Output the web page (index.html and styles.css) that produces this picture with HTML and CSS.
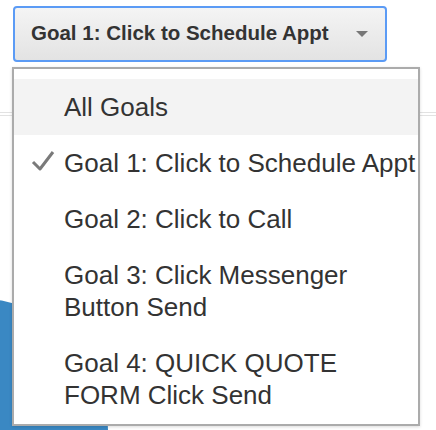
FILE: index.html
```html
<!DOCTYPE html>
<html lang="en">
<head>
  <meta charset="UTF-8" />
  <meta name="viewport" content="width=device-width, initial-scale=1.0"/>
  <title>Goal Filter</title>
  <link rel="stylesheet" href="styles.css">
</head>
<body>
  <div class="page">
    <div class="toolbar">
      <button class="goal-select">
        <span class="goal-label">Goal 1: Click to Schedule Appt</span>
        <span class="caret"></span>
      </button>
    </div>

    <div class="report">
      <div class="pie"></div>
    </div>

    <!-- open dropdown menu -->
    <ul class="goal-menu">
      <li class="goal-item hover">All Goals</li>
      <li class="goal-item selected">
        <svg class="check" width="24" height="24" viewBox="0 0 24 24">
          <polyline points="2,12 9,19 22,2" fill="none" stroke="#7a7a7a" stroke-width="3" stroke-linejoin="round" />
        </svg>
        Goal 1: Click to Schedule Appt
      </li>
      <li class="goal-item">Goal 2: Click to Call</li>
      <li class="goal-item">Goal 3: Click Messenger Button Send</li>
      <li class="goal-item">Goal 4: QUICK QUOTE FORM Click Send</li>
    </ul>
  </div>
</body>
</html>
```

FILE: styles.css
```css
:root {
  --text-color: #333333;
  --focus-color: #5b9bf5;
  --menu-border: #ababab;
  --hover-bg: #f3f3f3;
  --chart-blue: #3a88c3;
}
body {
  margin: 0;
  font-family: 'Liberation Sans', Arial, sans-serif;
  color: var(--text-color);
  background-color: #ffffff;
  overflow: hidden;
}
.page {
  position: relative;
  width: 436px;
  height: 430px;
  overflow: hidden;
}
.toolbar {
  height: 116px;
  padding: 6px 0 0 13px;
  box-sizing: border-box;
  border-bottom: 4px double #e2e2e2;
}
.goal-select {
  display: flex;
  align-items: center;
  justify-content: space-between;
  width: 374px;
  height: 56px;
  padding: 0 17px 0 16px;
  border: 2px solid var(--focus-color);
  border-radius: 4px;
  background: linear-gradient(#f4f4f4, #e3e3e3);
  font-family: 'Liberation Sans', Arial, sans-serif;
  font-size: 20.5px;
  font-weight: bold;
  color: var(--text-color);
  cursor: pointer;
}
.goal-label {
  margin-top: -2px;
}
.caret {
  width: 0;
  height: 0;
  border-left: 6px solid transparent;
  border-right: 6px solid transparent;
  border-top: 6px solid #777;
  margin-top: -1px;
}
.report {
  padding-top: 182px;
}
.pie {
  width: 264px;
  height: 264px;
  margin-left: -156px;
  border-radius: 50%;
  background-color: var(--chart-blue);
}
.goal-menu {
  position: absolute;
  top: 67px;
  left: 12px;
  width: 408px;
  box-sizing: border-box;
  margin: 0;
  padding: 10px 0 1px 0;
  list-style: none;
  background-color: #ffffff;
  border: 2px solid var(--menu-border);
  box-shadow: 0 1px 3px rgba(0,0,0,0.15);
}
.goal-item {
  position: relative;
  padding: 12px 0 12px 50px;
  font-size: 26px;
  line-height: 32px;
  cursor: pointer;
}
.goal-item.hover {
  background-color: var(--hover-bg);
}
.check {
  position: absolute;
  left: 17px;
  top: 15px;
  filter: blur(0.4px);
}
```
